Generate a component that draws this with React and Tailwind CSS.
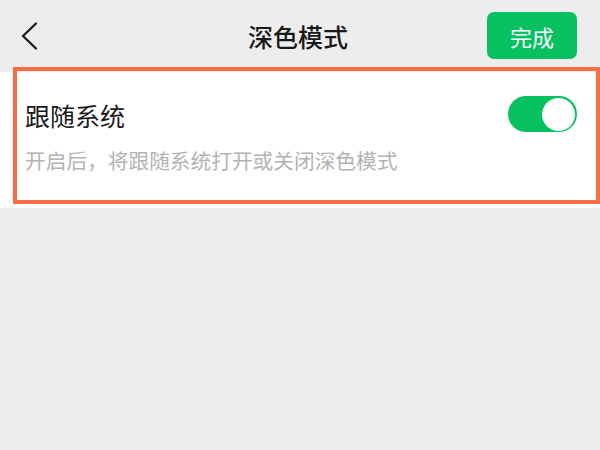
import React from "react";

export default function App() {
  return (
    <div
      className="relative w-[600px] h-[450px] bg-[#ededed] overflow-hidden"
      style={{ fontFamily: '"Noto Sans CJK SC", "Noto Sans", sans-serif' }}
    >
      <div className="relative h-[72px] flex items-center justify-between pl-[20px] pr-[23px]">
        <svg width="18" height="28" viewBox="0 0 18 28" className="shrink-0">
          <polyline
            points="16,1.5 3,14 16,26.5"
            fill="none"
            stroke="#1a1a1a"
            strokeWidth="2.3"
            strokeLinecap="round"
            strokeLinejoin="round"
          />
        </svg>
        <div className="absolute left-0 right-0 top-0 h-[72px] flex items-center justify-center pointer-events-none">
          <span className="text-[25px] leading-none font-medium text-[#191919] ml-[-4px]">深色模式</span>
        </div>
        <button className="relative mt-[-1px] w-[90px] h-[47px] rounded-[7px] bg-[#07c160] text-white text-[22px] font-normal leading-none flex items-center justify-center">
          完成
        </button>
      </div>

      <div className="bg-white h-[136px] pl-[25px] pr-[23px] pt-[24px]">
        <div className="flex items-center justify-between h-[36px]">
          <span className="text-[25px] leading-none text-[#191919] mt-[3px]">跟随系统</span>
          <div className="w-[69px] h-[36px] rounded-full bg-[#07c160] flex items-center justify-end pr-[2px]">
            <div className="w-[33px] h-[33px] rounded-full bg-white" />
          </div>
        </div>
        <div className="mt-[14px] h-[28px] flex items-center text-[20.7px] leading-none text-[#b3b3b3]">
          开启后，将跟随系统打开或关闭深色模式
        </div>
      </div>

      <div className="absolute left-[13px] top-[67px] w-[587px] h-[137px] border-[4px] border-[#fa6e41] pointer-events-none" />
    </div>
  );
}
